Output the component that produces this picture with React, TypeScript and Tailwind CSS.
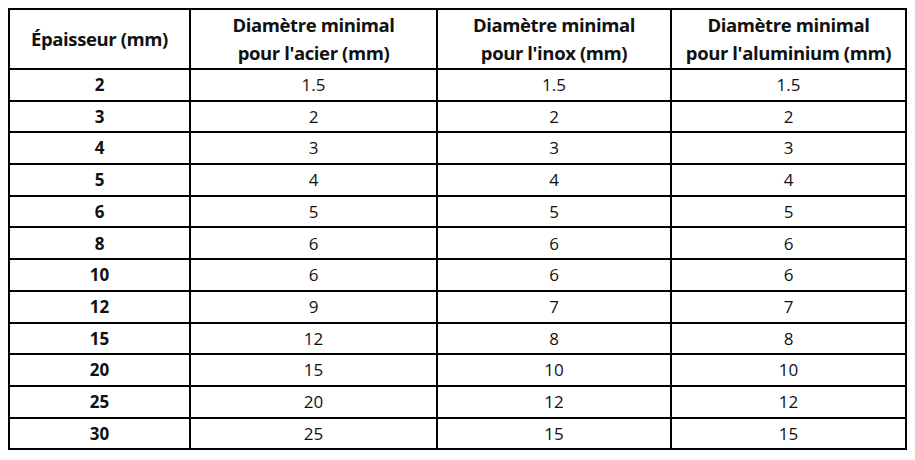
import React from "react";

const rows: [string, string, string, string][] = [
  ["2", "1.5", "1.5", "1.5"],
  ["3", "2", "2", "2"],
  ["4", "3", "3", "3"],
  ["5", "4", "4", "4"],
  ["6", "5", "5", "5"],
  ["8", "6", "6", "6"],
  ["10", "6", "6", "6"],
  ["12", "9", "7", "7"],
  ["15", "12", "8", "8"],
  ["20", "15", "10", "10"],
  ["25", "20", "12", "12"],
  ["30", "25", "15", "15"],
];

const th = "border-2 border-black font-bold text-[18.5px] leading-[28px] tracking-[-0.4px] p-0";
const td = "border-2 border-black text-center text-[17px] p-0";

export default function App() {
  return (
    <div
      className="w-[915px] h-[460px] bg-white pl-[8px] pt-[8px] text-[#111]"
      style={{ fontFamily: "'Open Sans', 'Liberation Sans', sans-serif" }}
    >
      <table className="border-collapse border-2 border-black table-fixed w-[897px]">
        <colgroup>
          <col className="w-[181px]" />
          <col className="w-[247px]" />
          <col className="w-[234px]" />
          <col className="w-[235px]" />
        </colgroup>
        <thead>
          <tr className="h-[60px]">
            <th className={th}>Épaisseur (mm)</th>
            <th className={th}>
              Diamètre minimal
              <br />
              pour l'acier (mm)
            </th>
            <th className={th}>
              Diamètre minimal
              <br />
              pour l'inox (mm)
            </th>
            <th className={th}>
              Diamètre minimal
              <br />
              pour l'aluminium (mm)
            </th>
          </tr>
        </thead>
        <tbody>
          {rows.map((r, i) => (
            <tr key={i} className="h-[31.7px]">
              <td className={td + " font-bold"}>{r[0]}</td>
              <td className={td}>{r[1]}</td>
              <td className={td}>{r[2]}</td>
              <td className={td}>{r[3]}</td>
            </tr>
          ))}
        </tbody>
      </table>
    </div>
  );
}
